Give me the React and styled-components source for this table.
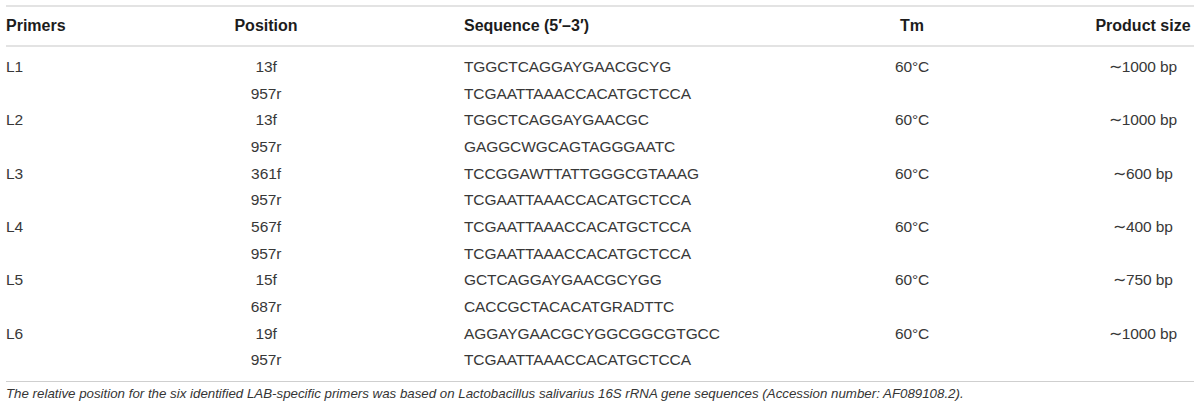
import React from "react";
import styled, { createGlobalStyle } from "styled-components";

const GlobalStyle = createGlobalStyle`
  body {
    margin: 0;
    background: #ffffff;
    font-family: "Liberation Sans", Arial, sans-serif;
  }
`;

const Page = styled.div`
  padding: 5px 6px 0 6px;
  width: 1188px;
`;

const COLUMNS = "62px 396px 268px 360px 102px";

const HeaderRow = styled.div`
  display: grid;
  grid-template-columns: ${COLUMNS};
  align-items: center;
  height: 38px;
  border-top: 2px solid #e3e3e3;
  border-bottom: 2px solid #e3e3e3;
`;

const HeadCell = styled.div`
  font-size: 16px;
  font-weight: 700;
  color: #1c1c1c;
  white-space: nowrap;
  text-align: ${(p) => p.align || "left"};
`;

const Body = styled.div`
  padding: 6.7px 0 7px 0;
  border-bottom: 1px solid #cfcfcf;
`;

const Row = styled.div`
  display: grid;
  grid-template-columns: ${COLUMNS};
  align-items: center;
  height: 26.67px;
`;

const Cell = styled.div`
  font-size: 15.5px;
  color: #383838;
  white-space: nowrap;
  letter-spacing: -0.1px;
  text-align: ${(p) => p.align || "left"};
`;

const Footnote = styled.p`
  margin: 0;
  padding-top: 4px;
  font-size: 13.3px;
  font-style: italic;
  color: #353535;
  white-space: nowrap;
`;

const primers = [
  {
    name: "L1",
    size: "∼1000 bp",
    pairs: [
      ["13f", "TGGCTCAGGAYGAACGCYG"],
      ["957r", "TCGAATTAAACCACATGCTCCA"],
    ],
  },
  {
    name: "L2",
    size: "∼1000 bp",
    pairs: [
      ["13f", "TGGCTCAGGAYGAACGC"],
      ["957r", "GAGGCWGCAGTAGGGAATC"],
    ],
  },
  {
    name: "L3",
    size: "∼600 bp",
    pairs: [
      ["361f", "TCCGGAWTTATTGGGCGTAAAG"],
      ["957r", "TCGAATTAAACCACATGCTCCA"],
    ],
  },
  {
    name: "L4",
    size: "∼400 bp",
    pairs: [
      ["567f", "TCGAATTAAACCACATGCTCCA"],
      ["957r", "TCGAATTAAACCACATGCTCCA"],
    ],
  },
  {
    name: "L5",
    size: "∼750 bp",
    pairs: [
      ["15f", "GCTCAGGAYGAACGCYGG"],
      ["687r", "CACCGCTACACATGRADTTC"],
    ],
  },
  {
    name: "L6",
    size: "∼1000 bp",
    pairs: [
      ["19f", "AGGAYGAACGCYGGCGGCGTGCC"],
      ["957r", "TCGAATTAAACCACATGCTCCA"],
    ],
  },
];

const App = () => {
  return (
    <Page>
      <GlobalStyle />
      <HeaderRow>
        <HeadCell>Primers</HeadCell>
        <HeadCell align="center">Position</HeadCell>
        <HeadCell>Sequence (5′–3′)</HeadCell>
        <HeadCell align="center">Tm</HeadCell>
        <HeadCell align="center">Product size</HeadCell>
      </HeaderRow>
      <Body>
        {primers.map((p) =>
          p.pairs.map(([pos, seq], i) => (
            <Row key={p.name + pos + i}>
              <Cell>{i === 0 ? p.name : ""}</Cell>
              <Cell align="center">{pos}</Cell>
              <Cell>{seq}</Cell>
              <Cell align="center">{i === 0 ? "60°C" : ""}</Cell>
              <Cell align="center">{i === 0 ? p.size : ""}</Cell>
            </Row>
          ))
        )}
      </Body>
      <Footnote>
        The relative position for the six identified LAB-specific primers was based on Lactobacillus
        salivarius 16S rRNA gene sequences (Accession number: AF089108.2).
      </Footnote>
    </Page>
  );
};

export default App;
